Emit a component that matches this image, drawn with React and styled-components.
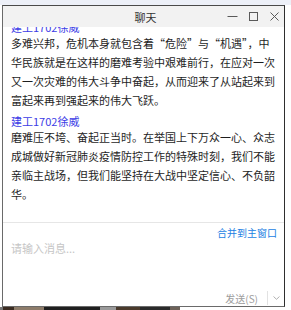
import React from "react";
import styled, { createGlobalStyle } from "styled-components";

const GlobalStyle = createGlobalStyle`
  html, body {
    margin: 0;
    padding: 0;
    background: #ffffff;
  }
  body {
    font-family: "Noto Sans CJK SC", "Noto Sans", sans-serif;
  }
`;

const Desktop = styled.div`
  width: 291px;
  height: 310px;
  display: flex;
  flex-direction: column;
  overflow: hidden;
  background: #ffffff;
`;

const TopStrip = styled.div`
  height: 5px;
  flex: none;
  background: #edf0f8;
`;

const BottomStrip = styled.div`
  flex: 1;
  background: linear-gradient(
    to right,
    #777 0 3px,
    #3b2c22 3px 14px,
    #8d7c6a 14px 44px,
    #1f1f1f 44px 100px,
    #9a9a9a 100px 116px,
    #4a3a2c 116px 140px,
    #2a2a2a 140px 170px,
    #6d6259 170px 180px,
    #ffffff 180px
  );
`;

const Window = styled.div`
  margin-left: 2px;
  width: 283px;
  height: 302px;
  box-sizing: border-box;
  border: 1px solid #6a6a6a;
  border-top-color: #4a4a4a;
  border-right-color: #2e2e2e;
  background: #ffffff;
  display: flex;
  flex-direction: column;
  flex: none;
`;

const TitleBar = styled.div`
  height: 21px;
  flex: none;
  background: #f2f2f2;
  display: grid;
  grid-template-columns: 1fr auto 1fr;
  align-items: center;
`;

const Title = styled.div`
  grid-column: 2;
  font-size: 11px;
  color: #333;
  padding-left: 4px;
`;

const Controls = styled.div`
  grid-column: 3;
  justify-self: end;
  display: flex;
  align-items: center;
  gap: 10px;
  padding-right: 4px;
`;

const ControlButton = styled.span`
  width: 11px;
  height: 11px;
  display: flex;
  align-items: center;
  justify-content: center;
  color: #5a5a5a;
`;

const Messages = styled.div`
  flex: 1;
  overflow: hidden;
  display: flex;
  flex-direction: column;
  justify-content: flex-end;
  padding: 0 6px 18px 8px;
  min-height: 0;
`;

const Message = styled.div`
  margin-top: 3px;
  flex: none;
`;

const Sender = styled.div`
  font-size: 11px;
  line-height: 16px;
  color: #3c3ce6;
  margin-bottom: -1px;
`;

const Body = styled.div`
  font-size: 11px;
  line-height: 19px;
  color: #1e1e1e;
`;

const InputArea = styled.div`
  height: 83px;
  flex: none;
  border-top: 1px solid #e6e6e6;
  display: flex;
  flex-direction: column;
`;

const Toolbar = styled.div`
  height: 18px;
  display: flex;
  align-items: center;
  justify-content: flex-end;
  padding-right: 7px;
`;

const MergeLink = styled.a`
  font-size: 10px;
  color: #1b7fe3;
  text-decoration: none;
  cursor: pointer;
`;

const Editor = styled.textarea`
  flex: 1;
  border: none;
  outline: none;
  resize: none;
  padding: 0 8px;
  margin: 0;
  font-family: "Noto Sans CJK SC", "Noto Sans", sans-serif;
  font-size: 11px;
  line-height: 14px;
  color: #222;
  background: transparent;

  &::placeholder {
    color: #c6c6c6;
  }
`;

const Footer = styled.div`
  height: 16px;
  display: flex;
  align-items: center;
  justify-content: flex-end;
  padding-right: 4px;
`;

const SendButton = styled.button`
  border: none;
  background: none;
  padding: 0;
  font-family: "Noto Sans CJK SC", "Noto Sans", sans-serif;
  font-size: 10px;
  color: #9d9d9d;
  cursor: pointer;
`;

const Divider = styled.span`
  width: 1px;
  height: 14px;
  background: #e2e2e2;
  margin: 0 4px 0 9px;
`;

const MoreButton = styled.span`
  width: 8px;
  display: flex;
  justify-content: center;
  color: #a8a8a8;
`;

const messages = [
  {
    id: 1,
    sender: "建工1702徐威",
    text: "多难兴邦，危机本身就包含着“危险”与“机遇”，中华民族就是在这样的磨难考验中艰难前行，在应对一次又一次灾难的伟大斗争中奋起，从而迎来了从站起来到富起来再到强起来的伟大飞跃。",
  },
  {
    id: 2,
    sender: "建工1702徐威",
    text: "磨难压不垮、奋起正当时。在举国上下万众一心、众志成城做好新冠肺炎疫情防控工作的特殊时刻，我们不能亲临主战场，但我们能坚持在大战中坚定信心、不负韶华。",
  },
];

const App = () => {
  return (
    <>
      <GlobalStyle />
      <Desktop>
        <TopStrip />
        <Window>
          <TitleBar>
            <Title>聊天</Title>
            <Controls>
              <ControlButton>
                <svg width="11" height="11" viewBox="0 0 11 11">
                  <line x1="0.5" y1="5.5" x2="10.5" y2="5.5" stroke="currentColor" strokeWidth="1" />
                </svg>
              </ControlButton>
              <ControlButton>
                <svg width="9" height="9" viewBox="0 0 9 9">
                  <rect x="0.5" y="0.5" width="8" height="8" fill="none" stroke="currentColor" strokeWidth="1" />
                </svg>
              </ControlButton>
              <ControlButton>
                <svg width="9" height="9" viewBox="0 0 9 9">
                  <path d="M0.5 0.5 L8.5 8.5 M8.5 0.5 L0.5 8.5" stroke="currentColor" strokeWidth="1" />
                </svg>
              </ControlButton>
            </Controls>
          </TitleBar>

          <Messages>
            {messages.map((m) => (
              <Message key={m.id}>
                <Sender>{m.sender}</Sender>
                <Body>{m.text}</Body>
              </Message>
            ))}
          </Messages>

          <InputArea>
            <Toolbar>
              <MergeLink>合并到主窗口</MergeLink>
            </Toolbar>
            <Editor placeholder="请输入消息..." />
            <Footer>
              <SendButton>发送(S)</SendButton>
              <Divider />
              <MoreButton>
                <svg width="7" height="4" viewBox="0 0 7 4">
                  <path d="M0.5 0.5 L3.5 3.3 L6.5 0.5" fill="none" stroke="currentColor" strokeWidth="0.9" />
                </svg>
              </MoreButton>
            </Footer>
          </InputArea>
        </Window>
        <BottomStrip />
      </Desktop>
    </>
  );
};

export default App;
